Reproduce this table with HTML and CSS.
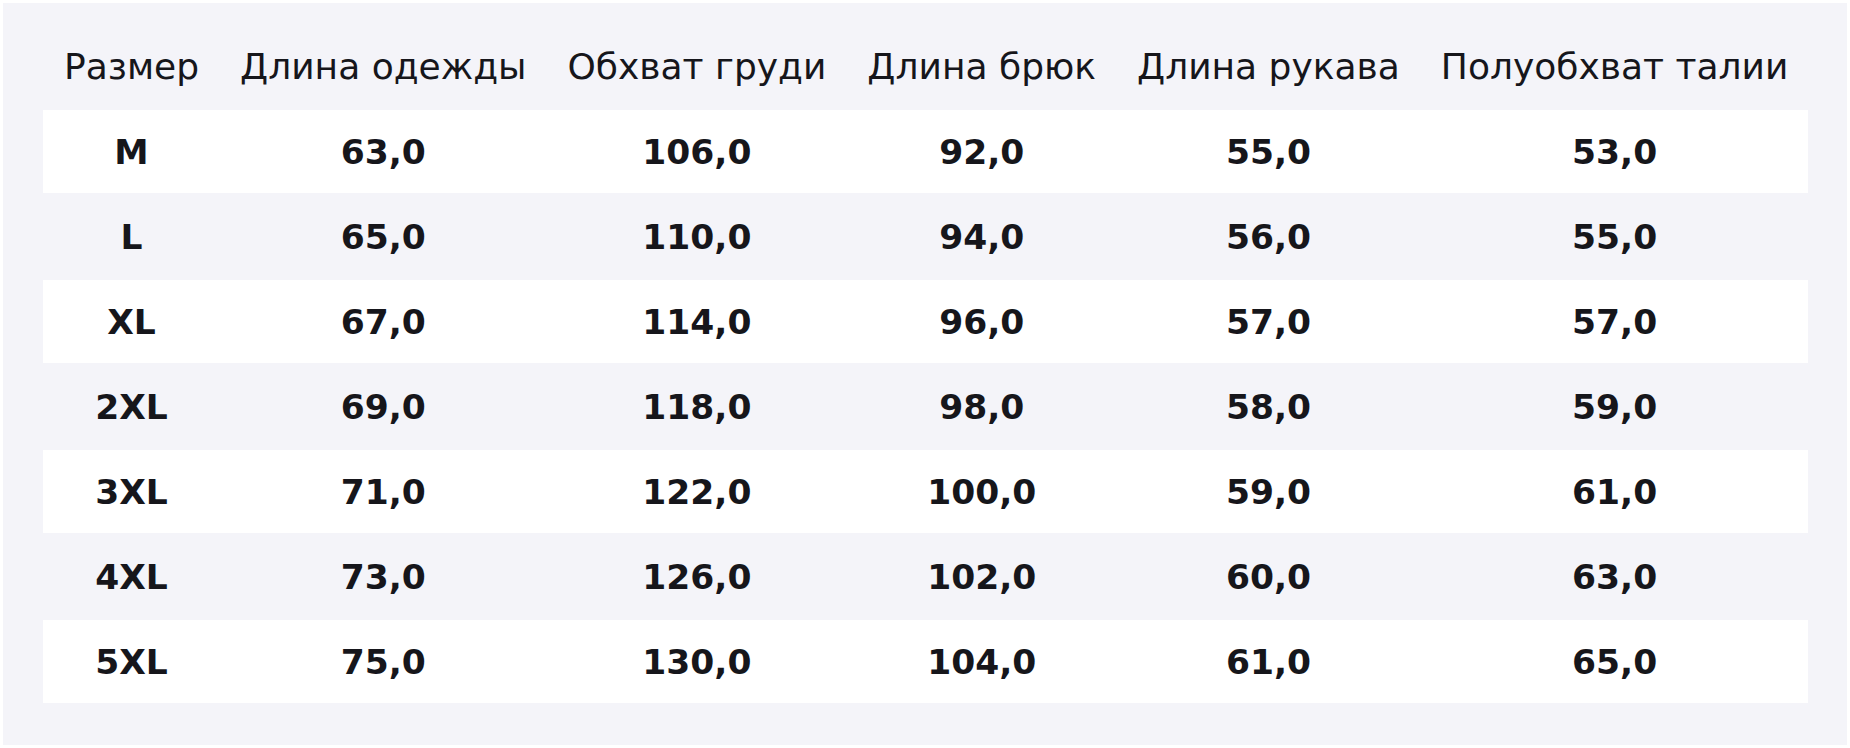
FILE: index.html
```html
<!DOCTYPE html>
<html lang="ru">
<head>
<meta charset="utf-8">
<title>Таблица размеров</title>
<link rel="stylesheet" href="styles.css">
</head>
<body>
<div class="panel">
  <table class="sizes">
    <thead>
      <tr>
        <th>Размер</th>
        <th>Длина одежды</th>
        <th>Обхват груди</th>
        <th>Длина брюк</th>
        <th>Длина рукава</th>
        <th>Полуобхват талии</th>
      </tr>
    </thead>
    <tbody>
      <tr class="odd"><td>M</td><td>63,0</td><td>106,0</td><td>92,0</td><td>55,0</td><td>53,0</td></tr>
      <tr class="even"><td>L</td><td>65,0</td><td>110,0</td><td>94,0</td><td>56,0</td><td>55,0</td></tr>
      <tr class="odd"><td>XL</td><td>67,0</td><td>114,0</td><td>96,0</td><td>57,0</td><td>57,0</td></tr>
      <tr class="even"><td>2XL</td><td>69,0</td><td>118,0</td><td>98,0</td><td>58,0</td><td>59,0</td></tr>
      <tr class="odd"><td>3XL</td><td>71,0</td><td>122,0</td><td>100,0</td><td>59,0</td><td>61,0</td></tr>
      <tr class="even"><td>4XL</td><td>73,0</td><td>126,0</td><td>102,0</td><td>60,0</td><td>63,0</td></tr>
      <tr class="odd"><td>5XL</td><td>75,0</td><td>130,0</td><td>104,0</td><td>61,0</td><td>65,0</td></tr>
    </tbody>
  </table>
</div>
</body>
</html>
```

FILE: styles.css
```css
html, body {
  margin: 0;
  padding: 0;
  background: #ffffff;
}

body {
  padding: 3px;
  font-family: "DejaVu Sans", "Liberation Sans", sans-serif;
  color: #16161b;
}

.panel {
  width: 1844px;
  height: 742px;
  box-sizing: border-box;
  padding: 40px 40px 0 40px;
  background: #f4f4f9;
  overflow: hidden;
}

.sizes {
  width: 1764px;
  border-collapse: collapse;
  border-spacing: 0;
}

.sizes th {
  height: 67px;
  box-sizing: border-box;
  padding: 3px 20px 0 21px;
  vertical-align: top;
  font-size: 36px;
  font-weight: normal;
  line-height: normal;
  white-space: nowrap;
  text-align: center;
}

.sizes td {
  padding: 0 20px 0 21px;
  font-size: 34.5px;
  font-weight: bold;
  text-align: center;
  vertical-align: middle;
  white-space: nowrap;
}

.sizes tr.odd td {
  height: 83px;
  background: #ffffff;
}

.sizes tr.even td {
  height: 87px;
  background: #f4f4f9;
}
```
